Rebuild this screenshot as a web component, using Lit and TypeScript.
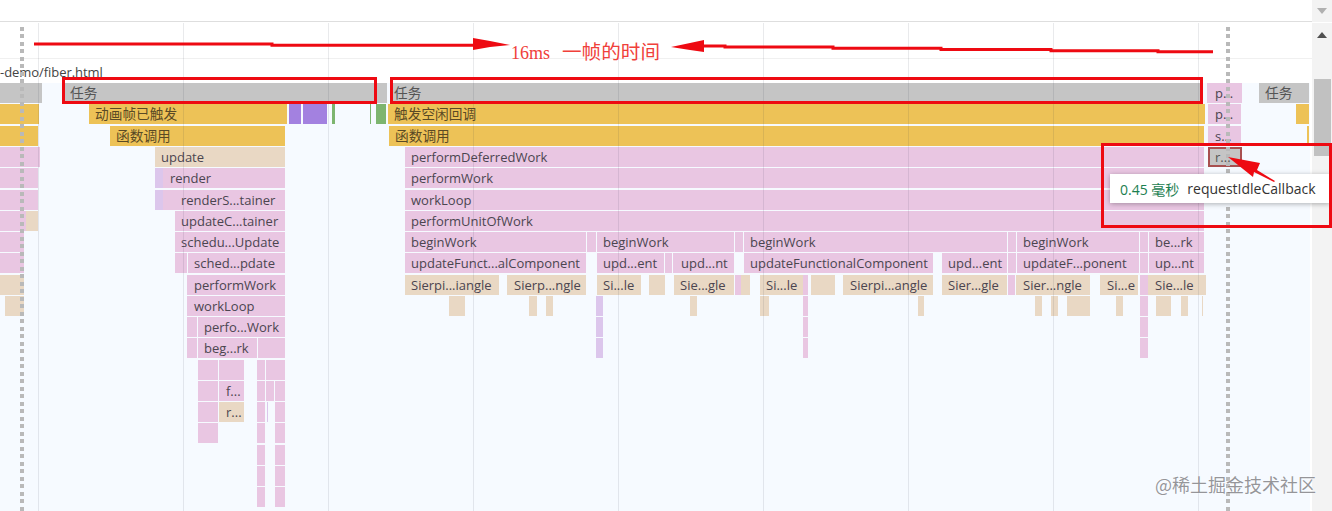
import { LitElement, html, css, svg } from 'lit';
import { customElement } from 'lit/decorators.js';

// one bar: [start x, end x, kind, label?, label x?]
type Bar = [number, number, string, string?, number?];

const ROW_TOPS = [83, 104, 126, 147, 168, 190, 211, 232, 253, 275, 296, 317, 338, 360, 381, 402, 423, 445, 466, 487];
const GRID = [38, 183, 328, 473, 618, 763, 908, 1053, 1198];

const deepRows: Bar[] = [
  [257, 265, 'p'],
  [275, 285, 'p'],
];

const ROWS: Bar[][] = [
  [[0, 42, 'g'], [65, 387, 'g', '任务', 70], [391, 1201, 'g', '任务', 394], [1207, 1242, 'p', 'p...', 1215], [1259, 1309, 'g', '任务', 1265]],
  [[0, 39, 'y'], [89, 287, 'y', '动画帧已触发', 95], [289, 301, 'v'], [303, 327, 'v'], [332, 335, 'n'], [370, 371, 'n'], [376, 386, 'n'], [388, 1205, 'y', '触发空闲回调', 394], [1208, 1241, 'p', 'p...', 1215], [1296, 1309, 'y']],
  [[0, 38, 'y'], [110, 285, 'y', '函数调用', 116], [389, 1204, 'y', '函数调用', 395], [1208, 1241, 'p', 's...', 1215], [1307, 1309, 'y']],
  [[0, 40, 'p'], [155, 285, 't', 'update', 161], [405, 1204, 'p', 'performDeferredWork', 411], [1208, 1242, 'h', 'r...', 1215]],
  [[0, 38, 'p'], [155, 163, 'l'], [163, 285, 'p', 'render', 170], [405, 1204, 'p', 'performWork', 411]],
  [[0, 38, 'p'], [155, 163, 'l'], [163, 285, 'p', 'renderS...tainer', 181], [405, 1204, 'p', 'workLoop', 411]],
  [[0, 26, 'p'], [26, 38, 't'], [175, 285, 'p', 'updateC...tainer', 181], [405, 1204, 'p', 'performUnitOfWork', 411]],
  [[0, 24, 'p'], [175, 285, 'p', 'schedu...Update', 181], [405, 586, 'p', 'beginWork', 411], [587, 596, 'p'], [597, 734, 'p', 'beginWork', 603], [735, 743, 'p'], [744, 1007, 'p', 'beginWork', 750], [1008, 1016, 'p'], [1017, 1139, 'p', 'beginWork', 1023], [1140, 1148, 'p'], [1149, 1204, 'p', 'be...rk', 1155]],
  [[0, 24, 'p'], [175, 187, 'p'], [188, 285, 'p', 'sched...pdate', 194], [405, 586, 'p', 'updateFunct...alComponent', 411], [597, 664, 'p', 'upd...ent', 603], [665, 672, 'p'], [673, 734, 'p', 'upd...nt', 681], [744, 933, 'p', 'updateFunctionalComponent', 750], [942, 1007, 'p', 'upd...ent', 948], [1008, 1016, 'p'], [1017, 1139, 'p', 'updateF...ponent', 1023], [1140, 1148, 'p'], [1149, 1204, 'p', 'up...nt', 1155]],
  [[0, 24, 't'], [187, 285, 'p', 'performWork', 194], [405, 499, 't', 'Sierpi...iangle', 411], [507, 586, 't', 'Sierp...ngle', 514], [597, 641, 't', 'Si...le', 603], [649, 665, 't'], [674, 734, 't', 'Sie...gle', 680], [735, 741, 'p'], [741, 750, 't'], [760, 803, 't', 'Si...le', 766], [803, 808, 'p'], [811, 835, 't'], [843, 933, 't', 'Sierpi...angle', 850], [942, 1007, 't', 'Sier...gle', 948], [1008, 1015, 'p'], [1016, 1090, 't', 'Sier...ngle', 1023], [1100, 1138, 't', 'Si...e', 1107], [1140, 1148, 'p'], [1148, 1206, 't', 'Sie...le', 1155]],
  [[5, 24, 't'], [187, 285, 'p', 'workLoop', 194], [449, 465, 't'], [529, 537, 't'], [546, 553, 't'], [596, 603, 'l'], [690, 697, 't'], [760, 769, 't'], [803, 808, 'p'], [918, 924, 't'], [1035, 1042, 't'], [1051, 1058, 't'], [1067, 1090, 't'], [1116, 1123, 't'], [1140, 1148, 'p'], [1156, 1171, 't'], [1181, 1188, 't'], [1202, 1203, 't']],
  [[187, 197, 'p'], [198, 285, 'p', 'perfo...Work', 204], [596, 603, 'l'], [803, 808, 'p'], [1140, 1148, 'p']],
  [[187, 197, 'p'], [198, 257, 'p', 'beg...rk', 204], [258, 285, 'p'], [596, 603, 'l'], [803, 808, 'p'], [1140, 1148, 'p']],
  [[198, 218, 'p'], [219, 244, 'p'], [257, 265, 'p'], [266, 285, 'p']],
  [[198, 218, 'p'], [219, 244, 'p', 'f...', 226], [257, 265, 'p'], [266, 274, 'p'], [275, 285, 'p']],
  [[198, 218, 'p'], [219, 244, 't', 'r...', 226], [257, 265, 'p'], [267, 268, 'l'], [275, 285, 'p']],
  [[198, 218, 'p'], ...deepRows],
  deepRows,
  deepRows,
  deepRows,
];

@customElement('app-root')
export class AppRoot extends LitElement {
  static styles = css`
    :host {
      display: block;
      position: relative;
      width: 1332px;
      height: 511px;
      overflow: hidden;
      font-family: 'Open Sans', 'Noto Sans CJK SC', sans-serif;
    }
    .page { display: flex; height: 511px; background: #fff; }
    .timeline { position: relative; width: 1312px; display: flex; flex-direction: column; }
    .topbar { height: 21px; flex: none; border-bottom: 1px solid #dedede; }
    .overview { height: 36px; flex: none; border-bottom: 1px solid #f0f0f0; }
    .url { height: 24px; flex: none; font-size: 13px; line-height: 27px; letter-spacing: -0.05px; color: #444; white-space: nowrap; }
    .flame { flex: 1; margin-right: 2px; background: #f6faff; }

    .bar {
      position: absolute;
      height: 20px;
      font-size: 13px;
      line-height: 20px;
      color: #4b4550;
      white-space: nowrap;
      box-sizing: border-box;
    }
    .zh { font-size: 13.7px; }
    .g { background: #c5c5c5; color: #555; }
    .y { background: #edc257; color: #5a4a25; }
    .p { background: #e9c6e2; }
    .t { background: #e9d8c4; }
    .v { background: #a381e0; }
    .n { background: #7db56f; }
    .l { background: #dcc6ec; }
    .h { background: #c5c5c5; border: 2px solid #a85050; line-height: 16px; color: #555; }

    .grid { position: absolute; top: 23px; bottom: 0; width: 1px; background: rgba(40, 50, 70, 0.1); }
    .dots {
      position: absolute;
      top: 27px;
      bottom: 0;
      width: 4px;
      background: repeating-linear-gradient(#b9b9b9 0 4px, transparent 4px 7.5px);
    }

    .marks { position: absolute; left: 0; top: 0; width: 1332px; height: 511px; pointer-events: none; }
    .caption {
      position: absolute;
      left: 511px;
      top: 41px;
      font-family: 'Liberation Serif', 'Noto Sans CJK SC', serif;
      font-size: 18px;
      line-height: 24px;
      color: #f0403a;
      white-space: pre;
    }
    .caption span { font-size: 19.6px; margin-left: 12px; }
    .tooltip {
      position: absolute;
      left: 1110px;
      top: 174px;
      width: 220px;
      height: 29px;
      box-sizing: border-box;
      padding-left: 10px;
      display: flex;
      align-items: center;
      gap: 8px;
      background: #fff;
      box-shadow: 0 1px 5px rgba(0, 0, 0, 0.3);
      font-size: 14px;
      color: #333;
      white-space: nowrap;
    }
    .tooltip .time { color: #1c8051; }
    .watermark {
      position: absolute;
      left: 1155px;
      top: 472px;
      font-family: 'Noto Sans CJK SC', sans-serif;
      font-size: 18px;
      line-height: 24px;
      color: rgba(115, 115, 120, 0.75);
      text-shadow: 0 0 2px #fff;
      white-space: nowrap;
    }

    .scrollbar { width: 20px; flex: none; background: #f3f3f3; display: flex; flex-direction: column; align-items: center; }
    .scroll-down { height: 22px; width: 100%; display: flex; align-items: center; justify-content: center; border-bottom: 1px solid #fff; }
    .scroll-up { height: 23px; display: flex; align-items: center; justify-content: center; }
    .thumb { width: 17px; height: 77px; margin-top: 33px; background: #c1c1c1; }
  `;

  renderBars() {
    return ROWS.map((row, i) =>
      row.map(([x0, x1, kind, label, labelX]) => {
        // the highlighted bar has a 2px border, keep its label on the same x
        const inset = kind === 'h' ? 2 : 0;
        const pad = label ? (labelX ?? x0) - x0 - inset : 0;
        const zh = label && /[^\x00-\x7f]/.test(label) ? 'zh' : '';
        return html`<div
          class="bar ${kind} ${zh}"
          style="left:${x0}px;top:${ROW_TOPS[i]}px;width:${x1 - x0}px;padding-left:${pad}px"
        >${label ?? ''}</div>`;
      })
    );
  }

  renderMarks() {
    const red = '#ee0a12';
    return html`<svg class="marks" viewBox="0 0 1332 511">
      ${svg`
        <g fill="none" stroke=${red} stroke-width="3">
          <rect x="63.5" y="78.5" width="312" height="24" />
          <rect x="391.5" y="78.5" width="810" height="24" />
          <rect x="1102.5" y="144.5" width="228" height="82" />
          <path d="M34 44H272V45.3H476" />
          <path d="M702 46H725V47H833V48.3H941V49.5H1051V50.7H1158V51.7H1213" />
        </g>
        <path d="M473 38L490 41L510 45L490 47L473 50Z" fill=${red} />
        <path d="M671 47L690 43L704 40V52L690 50Z" fill=${red} />
        <path d="M1228 157L1260 163L1257 170L1275 181L1274 182L1254 172L1253 177Z" fill=${red} />
      `}
    </svg>`;
  }

  render() {
    return html`
      <div class="page">
        <div class="timeline">
          <div class="topbar"></div>
          <div class="overview"></div>
          <div class="url">-demo/fiber.html</div>
          <div class="flame"></div>
          ${this.renderBars()}
          ${GRID.map((x) => html`<div class="grid" style="left:${x}px"></div>`)}
          <div class="dots" style="left:20px"></div>
          <div class="dots" style="left:1226px"></div>
        </div>
        <div class="scrollbar">
          <div class="scroll-down">
            <svg width="10" height="6" viewBox="0 0 10 6"><path d="M0 0H10L5 6Z" fill="#b0b0b0" /></svg>
          </div>
          <div class="scroll-up">
            <svg width="10" height="6" viewBox="0 0 10 6"><path d="M0 6H10L5 0Z" fill="#505050" /></svg>
          </div>
          <div class="thumb"></div>
        </div>
      </div>
      <div class="tooltip"><span class="time">0.45 毫秒</span><span>requestIdleCallback</span></div>
      ${this.renderMarks()}
      <div class="caption">16ms<span>一帧的时间</span></div>
      <div class="watermark">@稀土掘金技术社区</div>
    `;
  }
}
